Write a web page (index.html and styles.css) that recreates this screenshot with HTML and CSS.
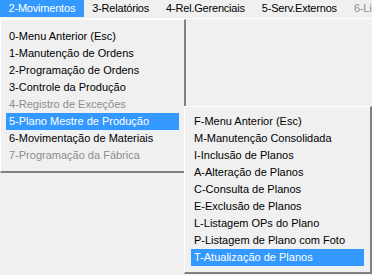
FILE: index.html
```html
<!DOCTYPE html>
<html>
<head>
<meta charset="utf-8">
<title>Movimentos</title>
<link rel="stylesheet" href="styles.css">
</head>
<body>
<div class="menubar">
  <span class="bar-item active">2-Movimentos</span>
  <span class="bar-item">3-Relatórios</span>
  <span class="bar-item">4-Rel.Gerenciais</span>
  <span class="bar-item">5-Serv.Externos</span>
  <span class="bar-item disabled">6-Lista de Ferramentas</span>
</div>
<div class="menu menu-main">
  <div class="menu-item">0-Menu Anterior (Esc)</div>
  <div class="menu-item">1-Manutenção de Ordens</div>
  <div class="menu-item">2-Programação de Ordens</div>
  <div class="menu-item">3-Controle da Produção</div>
  <div class="menu-item disabled">4-Registro de Exceções</div>
  <div class="menu-item active">5-Plano Mestre de Produção</div>
  <div class="menu-item">6-Movimentação de Materiais</div>
  <div class="menu-item disabled">7-Programação da Fábrica</div>
</div>
<div class="menu menu-sub">
  <div class="menu-item">F-Menu Anterior (Esc)</div>
  <div class="menu-item">M-Manutenção Consolidada</div>
  <div class="menu-item">I-Inclusão de Planos</div>
  <div class="menu-item">A-Alteração de Planos</div>
  <div class="menu-item">C-Consulta de Planos</div>
  <div class="menu-item">E-Exclusão de Planos</div>
  <div class="menu-item">L-Listagem OPs do Plano</div>
  <div class="menu-item">P-Listagem de Plano com Foto</div>
  <div class="menu-item active">T-Atualização de Planos</div>
</div>
</body>
</html>
```
FILE: styles.css
```css
html, body {
  margin: 0;
  height: 100%;
  overflow: hidden;
  background: #f0f0f0;
  font-family: "Liberation Sans", Arial, sans-serif;
  font-size: 11px;
  color: #000;
}
.menubar {
  display: flex;
  height: 18px;
  border-bottom: 1px solid #fff;
  white-space: nowrap;
  overflow: hidden;
  letter-spacing: -0.2px;
}
.bar-item {
  padding: 0 8.5px;
  line-height: 17px;
  height: 17px;
}
.bar-item.active {
  background: #3399ff;
  color: #fff;
}
.bar-item.disabled {
  color: #8d8d8d;
}

.menu {
  position: absolute;
  background: #f0f0f0;
  border-top: 1px solid #fff;
  border-left: 1px solid #fff;
  border-right: 2px solid #808080;
  border-bottom: 2px solid #808080;
}
.menu-main {
  left: 0;
  top: 19px;
  width: 183px;
  padding: 8px 0 7px;
}
.menu-main .menu-item {
  margin: 0 5px;
}
.menu-sub {
  left: 184px;
  top: 106px;
  width: 185px;
  padding: 6px 0 6px;
  z-index: 1;
}
.menu-sub .menu-item {
  margin: 0 6px;
}
.menu-item {
  height: 17px;
  line-height: 17px;
  padding-left: 3px;
  white-space: nowrap;
}
.menu-item.active {
  background: #3399ff;
  color: #fff;
}
.menu-item.disabled {
  color: #8d8d8d;
}
```
